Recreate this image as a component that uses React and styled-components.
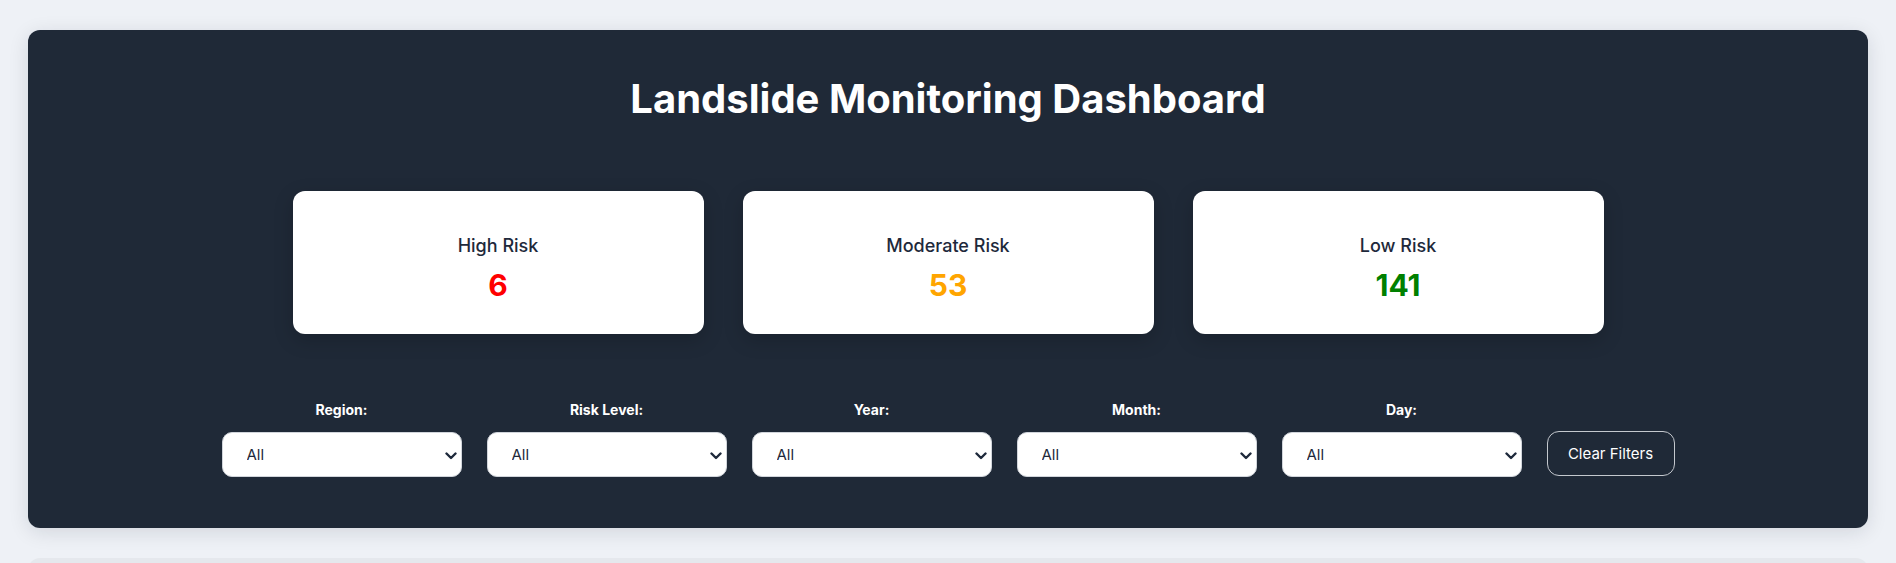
import styled, { createGlobalStyle } from "styled-components";

const GlobalStyle = createGlobalStyle`
    body {
        margin: 0;
        background: #eef1f6;
        font-family: Inter, "Noto Sans", sans-serif;
    }
`

const Page = styled("div")`
    padding: 30px 28px 0;
`

const Panel = styled("div")`
    background: #1f2937;
    border-radius: 12px;
    padding: 45px 0 51px;
    box-shadow: 0 4px 20px rgba(15, 23, 42, 0.12);
`

const Title = styled("h1")`
    margin: 0;
    color: #ffffff;
    font-size: 40px;
    line-height: 48px;
    font-weight: 700;
    text-align: center;
`

const CardRow = styled("div")`
    display: flex;
    justify-content: center;
    gap: 39px;
    margin-top: 68px;
`

const Card = styled("div")`
    box-sizing: border-box;
    width: 411px;
    height: 143px;
    padding-top: 44px;
    background: #ffffff;
    border-radius: 12px;
    display: flex;
    flex-direction: column;
    align-items: center;
    gap: 10px;
    box-shadow: 0 6px 20px rgba(0, 0, 0, 0.18);
`

const CardLabel = styled("div")`
    font-size: 18px;
    line-height: 22px;
    font-weight: 500;
    color: #1e293b;
`

const CardValue = styled("div")`
    font-size: 30px;
    line-height: 36px;
    font-weight: 700;
    color: ${(p) => p.color};
`

const FilterRow = styled("div")`
    display: flex;
    justify-content: center;
    align-items: flex-end;
    gap: 25px;
    margin-top: 67px;
`

const FilterGroup = styled("div")`
    display: flex;
    flex-direction: column;
    align-items: center;
    gap: 14px;
`

const FilterLabel = styled("label")`
    color: #ffffff;
    font-size: 14px;
    line-height: 17px;
    font-weight: 700;
`

const SelectBox = styled("div")`
    position: relative;
    width: 240px;
    height: 45px;
`

const Select = styled("select")`
    appearance: none;
    box-sizing: border-box;
    width: 100%;
    height: 100%;
    padding: 0 24px;
    border: 1px solid #d1d5db;
    border-radius: 10px;
    background: #ffffff;
    color: #1e293b;
    font-family: Inter, sans-serif;
    font-size: 15px;
`

const Chevron = styled("svg")`
    position: absolute;
    right: 5px;
    top: 50%;
    width: 12px;
    height: 8px;
    margin-top: -3px;
    pointer-events: none;
`

const ClearButton = styled("button")`
    width: 128px;
    height: 45px;
    margin-bottom: 1px;
    border: 1px solid #c4c8ce;
    border-radius: 12px;
    background: transparent;
    color: #ffffff;
    font-family: Inter, sans-serif;
    font-size: 15px;
    font-weight: 400;
`

const NextSection = styled("div")`
    margin-top: 30px;
    height: 60px;
    background: #e5e8ed;
    border-radius: 12px 12px 0 0;
`

const stats = [
    { label: "High Risk", value: 6, color: "#ff0000" },
    { label: "Moderate Risk", value: 53, color: "#ffa500" },
    { label: "Low Risk", value: 141, color: "#008000" },
]

const filters = ["Region:", "Risk Level:", "Year:", "Month:", "Day:"]

const App = () => {
    return (
        <Page>
            <GlobalStyle />
            <Panel>
                <Title>Landslide Monitoring Dashboard</Title>
                <CardRow>
                    {stats.map((s) => (
                        <Card key={s.label}>
                            <CardLabel>{s.label}</CardLabel>
                            <CardValue color={s.color}>{s.value}</CardValue>
                        </Card>
                    ))}
                </CardRow>
                <FilterRow>
                    {filters.map((f) => (
                        <FilterGroup key={f}>
                            <FilterLabel>{f}</FilterLabel>
                            <SelectBox>
                                <Select defaultValue="all">
                                    <option value="all">All</option>
                                </Select>
                                <Chevron viewBox="0 0 12 8">
                                    <path d="M1.5 1.5 L6 6 L10.5 1.5" fill="none" stroke="#1e293b" strokeWidth="2.4" strokeLinecap="round" strokeLinejoin="round" />
                                </Chevron>
                            </SelectBox>
                        </FilterGroup>
                    ))}
                    <ClearButton>Clear Filters</ClearButton>
                </FilterRow>
            </Panel>
            <NextSection />
        </Page>
    );
};

export default App;
